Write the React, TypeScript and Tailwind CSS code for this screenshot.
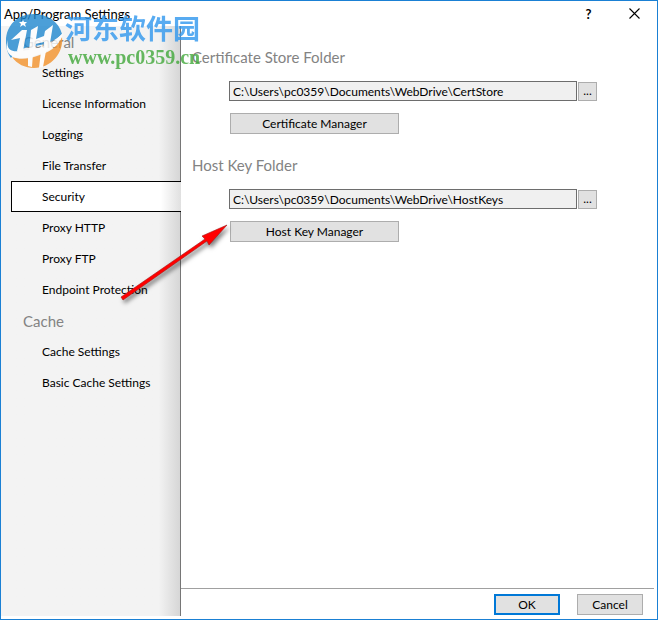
import React, { useState } from 'react';

interface NavGroup {
  title: string;
  items: string[];
}

const NAV: NavGroup[] = [
  {
    title: 'General',
    items: [
      'Settings',
      'License Information',
      'Logging',
      'File Transfer',
      'Security',
      'Proxy HTTP',
      'Proxy FTP',
      'Endpoint Protection',
    ],
  },
  { title: 'Cache', items: ['Cache Settings', 'Basic Cache Settings'] },
];

const BUTTON = 'border border-[#adadad] bg-[#e1e1e1] text-center';

function TitleBar() {
  return (
    <header className="flex h-[25px] items-center justify-between pl-[3px]">
      <h1 className="text-[13px] leading-6">App/Program Settings</h1>
      <div className="flex items-center">
        <button type="button" aria-label="Help" className="flex h-6 w-[45px] items-center justify-center text-[13px] font-bold">
          ?
        </button>
        <button type="button" aria-label="Close" className="flex h-6 w-[46px] items-center justify-center">
          <svg viewBox="0 0 11 11" className="size-[11px]" fill="none" stroke="#000" strokeWidth="1.1">
            <path d="M.5.5l10 10M10.5.5l-10 10" />
          </svg>
        </button>
      </div>
    </header>
  );
}

interface SidebarProps {
  active: string;
  onSelect: (item: string) => void;
}

function Sidebar({ active, onSelect }: SidebarProps) {
  return (
    <nav className="w-[180px] shrink-0 border-r border-[#767676] bg-[#f3f3f3] bg-linear-to-r from-[#f3f3f3] from-88% to-[#d6d6d6] pl-[10px]">
      {NAV.map((group) => (
        <section key={group.title}>
          <h2 className="h-[31px] pl-3 text-[15px] leading-8 text-[#838383]">{group.title}</h2>
          {group.items.map((item) => (
            <button
              key={item}
              type="button"
              onClick={() => onSelect(item)}
              className={`block h-[31px] text-left whitespace-nowrap ${
                item === active
                  ? 'relative w-[170px] border border-r-0 border-black bg-white bg-linear-to-r from-white from-88% to-[#e0e0e0] pl-[30px]'
                  : 'w-full pl-[31px]'
              }`}
            >
              {item}
            </button>
          ))}
        </section>
      ))}
    </nav>
  );
}

interface FolderSectionProps {
  id: string;
  title: string;
  path: string;
  manager: string;
}

function FolderSection({ id, title, path, manager }: FolderSectionProps) {
  return (
    <section className="h-[108px]">
      <label htmlFor={id} className="block pl-[11px] text-[15px] leading-6 text-[#838383]">
        {title}
      </label>
      <div className="mt-3 flex items-center gap-px pr-[60px] pl-12">
        <input
          id={id}
          type="text"
          readOnly
          defaultValue={path}
          className="h-5 min-w-0 flex-1 border border-[#6d6d6d] bg-[#f0f0f0] px-[3px]"
        />
        <button type="button" aria-label={`Browse ${title}`} className={`${BUTTON} h-[19px] w-[19px] leading-4`}>
          ...
        </button>
      </div>
      <button type="button" className={`${BUTTON} mt-3 ml-[49px] block h-[21px] w-[169px]`}>
        {manager}
      </button>
    </section>
  );
}

function Watermark() {
  return (
    <div className="pointer-events-none absolute top-[10px] left-1 flex opacity-80">
      <svg viewBox="0 0 60 60" className="size-[60px]">
        <path d="M1 30C1 14 13 3 29 3c14 0 25 8 28 20-8 8-16 10-27 12-12 2-19 4-24 12-4-5-5-11-5-17z" fill="#2088cf" />
        <path d="M57 26c2 16-11 31-28 31-9 0-17-4-22-11 8 3 16 2 25-1 12-4 20-8 25-19z" fill="#f3922a" />
        <path d="M3 29c-2 9 3 12 11 11 16-1 31-4 44-18-2 10-10 16-19 19-9 4-16 6-23 6C4 47-1 40 3 29z" fill="#fff" />
        <path d="M6 29l11-10h5l-4 21h-6l3-13z" fill="#fff" />
        <path d="M26 19l7-4-2 13 8-3 1-5 8-6-4 24-6 1 1-8-8 2-1 6-6 1z" fill="#fff" />
        <path d="M23 43l5-1-1 14-4-1zM36 40h5l-3 16-4 1z" fill="#fff" />
        <path d="M18 9l1 2h3l-2 2 1 3-3-2-3 2 1-3-2-2h3z" fill="#fff" />
      </svg>
      <div className="whitespace-nowrap">
        <p className="font-['Noto_Sans_CJK_SC',sans-serif] text-[27px] leading-[34px] font-bold text-[#2f97ee]">
          河东软件园
        </p>
        <p className="pl-[3px] font-['Liberation_Serif',serif] text-[20px] leading-6 font-bold text-[#41a83a]">
          www.pc0359.cn
        </p>
      </div>
    </div>
  );
}

function Arrow() {
  return (
    <svg
      viewBox="0 0 116 86"
      className="pointer-events-none absolute top-[218px] left-[115px] h-[86px] w-[116px] drop-shadow-[2px_3px_2px_rgba(0,0,0,0.5)]"
    >
      <path d="M5 78L89 20l-3-3L111 6 93 26l-2-4L7 81z" fill="#f00" stroke="#a31515" strokeWidth=".6" />
    </svg>
  );
}

export default function App() {
  const [active, setActive] = useState('Security');

  return (
    <div className="relative flex min-h-screen flex-col border border-[#1a80d4] bg-white pb-[3px] font-['Lato','Open_Sans',sans-serif] text-[12px] leading-4 text-black">
      <TitleBar />
      <div className="flex flex-1">
        <Sidebar active={active} onSelect={setActive} />
        <main className="flex min-w-0 flex-1 flex-col">
          <div className="flex-1 pt-[19px]">
            <FolderSection
              id="cert-store"
              title="Certificate Store Folder"
              path="C:\Users\pc0359\Documents\WebDrive\CertStore"
              manager="Certificate Manager"
            />
            <FolderSection
              id="host-keys"
              title="Host Key Folder"
              path="C:\Users\pc0359\Documents\WebDrive\HostKeys"
              manager="Host Key Manager"
            />
          </div>
          <footer className="mr-[3px] flex justify-end gap-[17px] border-t border-[#a0a0a0] pt-[5px] pr-[11px] pb-px">
            <button type="button" className="h-[21px] w-[66px] border-2 border-[#0078d7] bg-[#e1e1e1]">
              OK
            </button>
            <button type="button" className={`${BUTTON} h-[21px] w-[66px]`}>
              Cancel
            </button>
          </footer>
        </main>
      </div>
      <Watermark />
      <Arrow />
    </div>
  );
}
